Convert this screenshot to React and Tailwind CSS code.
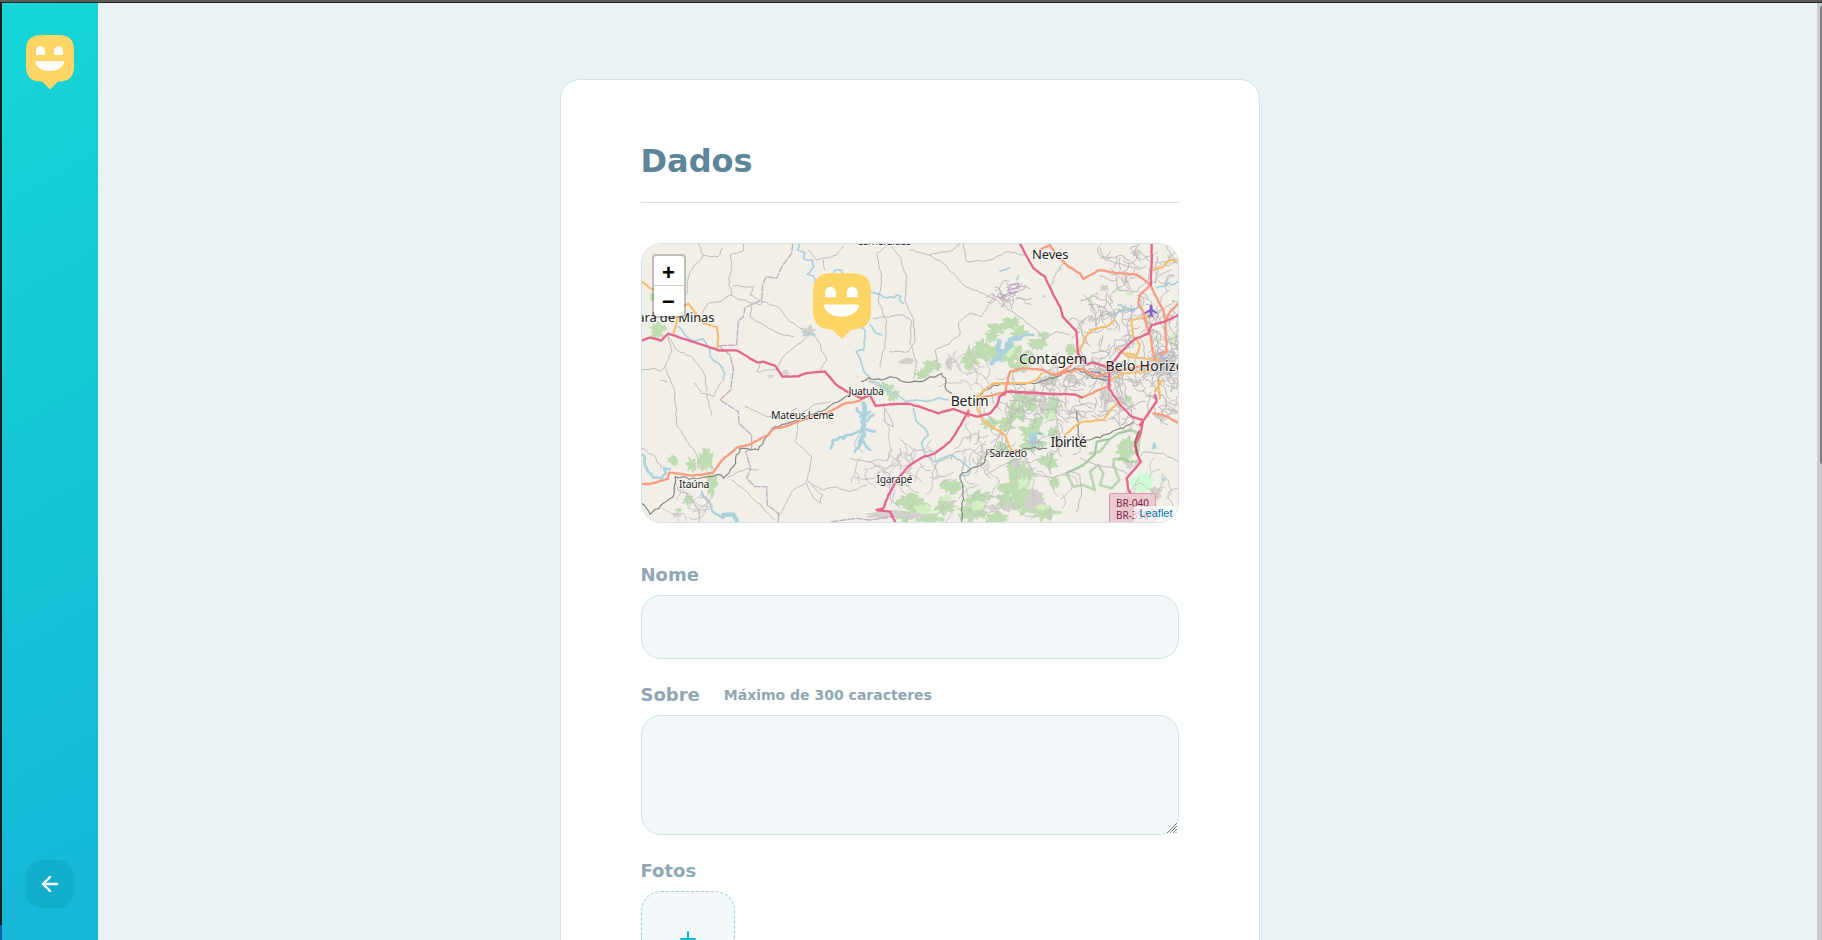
import { FiArrowLeft, FiPlus } from "react-icons/fi";

function Smiley({ className }) {
  return (
    <svg viewBox="0 0 48 54.4" className={className} aria-hidden="true">
      <path d="M15 0H33Q48 0 48 15V31.6Q48 46.6 33 46.6H32L24.8 53.8Q24 54.6 23.2 53.8L16 46.6H15Q0 46.6 0 31.6V15Q0 0 15 0Z" fill="#FFD666" />
      <path d="M10 20V15.8a4.5 4.5 0 0 1 9 0V20ZM28 20V15.8a4.5 4.5 0 0 1 9 0V20Z" fill="#fff" />
      <path d="M10 26H37Q38.6 26 38 27.8C36 33 30.5 36 23.6 36S11.200 33 9.100 27.800Q8.500 26 10 26Z" fill="#fff" />
    </svg>
  );
}

/* Repeatable pseudo random numbers, so the street grid is stable. */
function makeRandom(seed) {
  let s = seed;
  return () => {
    s = (s * 16807) % 2147483647;
    return s / 2147483647;
  };
}

/* Short wandering streets inside a box. */
function streets(seed, count, x, y, w, h, reach) {
  const rnd = makeRandom(seed);
  let d = "";
  for (let i = 0; i < count; i++) {
    let px = x + rnd() * w;
    let py = y + rnd() * h;
    let angle = rnd() * Math.PI * 2;
    d += `M${px.toFixed(0)} ${py.toFixed(0)}`;
    const steps = 3 + Math.floor(rnd() * 5);
    for (let k = 0; k < steps; k++) {
      angle += (rnd() - 0.5) * 1.7;
      px += Math.cos(angle) * reach;
      py += Math.sin(angle) * reach;
      d += `L${px.toFixed(0)} ${py.toFixed(0)}`;
    }
  }
  return d;
}

/* Ragged patches of woodland. */
function woods(seed, spots) {
  const rnd = makeRandom(seed);
  return spots
    .map(([cx, cy, rx, ry]) => {
      const n = 26;
      let d = "";
      for (let i = 0; i < n; i++) {
        const a = (i / n) * Math.PI * 2;
        const k = 0.5 + rnd() * 0.72;
        d += `${i ? "L" : "M"}${(cx + Math.cos(a) * rx * k).toFixed(0)} ${(cy + Math.sin(a) * ry * k).toFixed(0)}`;
      }
      return d + "Z";
    })
    .join("");
}

/* Breaks the straight legs of a polyline into small natural bends. */
function rough(d, amp) {
  const rnd = makeRandom(d.length * 31 + 7);
  const tokens = d.match(/[MLHV]|-?\d+(?:\.\d+)?/g);
  let out = "";
  let cmd = "M";
  let x = 0;
  let y = 0;
  for (let i = 0; i < tokens.length; ) {
    if (/[MLHV]/.test(tokens[i])) cmd = tokens[i++];
    let nx = x;
    let ny = y;
    if (cmd !== "V") nx = Number(tokens[i++]);
    if (cmd !== "H") ny = Number(tokens[i++]);
    if (cmd === "M") {
      out += `M${nx} ${ny}`;
      cmd = "L";
    } else {
      const length = Math.hypot(nx - x, ny - y) || 1;
      const n = Math.max(1, Math.round(length / 11));
      for (let k = 1; k < n; k++) {
        const off = (rnd() - 0.5) * 2 * amp;
        const t = k / n;
        out += `L${(x + (nx - x) * t - ((ny - y) / length) * off).toFixed(1)} ${(y + (ny - y) * t + ((nx - x) / length) * off).toFixed(1)}`;
      }
      out += `L${nx} ${ny}`;
      if (cmd !== "L") cmd = "L";
    }
    x = nx;
    y = ny;
  }
  return out;
}

function Rough({ d, amp = 2.5, ...rest }) {
  return <path d={rough(d, amp)} {...rest} />;
}

const WOOD = woods(77, [
  [305, 265, 34, 22], [245, 305, 26, 20], [260, 282, 28, 20], [330, 292, 28, 20], [180, 368, 34, 38], [218, 345, 26, 36], [300, 352, 34, 42], [250, 350, 26, 30], [378, 328, 30, 20], [402, 300, 18, 14], [350, 372, 26, 24], [68, 392, 30, 20], [40, 418, 24, 16], [485, 345, 16, 22], [330, 395, 26, 18], [425, 435, 18, 14],
  [345, 500, 44, 30], [320, 530, 34, 34], [425, 515, 24, 40], [365, 590, 38, 26], [290, 570, 26, 30], [240, 565, 30, 18], [275, 640, 26, 20], [370, 625, 40, 24], [415, 680, 30, 28], [340, 715, 42, 34], [320, 760, 50, 42], [355, 800, 60, 40], [400, 830, 50, 30], [205, 790, 46, 26], [190, 830, 50, 36], [125, 755, 36, 24], [105, 815, 38, 26], [22, 810, 40, 30], [60, 850, 46, 20], [255, 850, 40, 22], [310, 690, 22, 22], [430, 595, 20, 22], [385, 560, 22, 18], [650, 630, 26, 30], [645, 655, 30, 28], [435, 740, 18, 22], [285, 800, 30, 26], [655, 495, 14, 12],
  [-75, 460, 28, 16], [-50, 480, 22, 20], [-710, 675, 17, 17], [-655, 688, 18, 24], [-612, 676, 28, 34], [-595, 745, 18, 40], [-665, 795, 18, 16], [-695, 825, 12, 8], [-757, 285, 26, 28], [-772, 188, 9, 14], [-5, 800, 34, 24], [-20, 840, 30, 20],
]);

const SCRUB = woods(31, [
  [345, 745, 28, 20], [200, 812, 26, 18], [110, 790, 20, 14], [40, 822, 26, 16], [395, 815, 22, 14], [425, 545, 12, 18], [330, 505, 20, 12], [300, 350, 16, 18], [790, 310, 12, 24], [450, 100, 8, 6], [540, 195, 8, 8], [628, 165, 10, 7], [740, 310, 10, 12], [655, 175, 12, 7],
]);

const BUILT = woods(55, [
  [-302, 290, 20, 18], [-373, 413, 14, 8], [-418, 424, 10, 7], [-10, 378, 22, 10], [678, 52, 16, 14], [582, 160, 14, 10], [545, 252, 16, 10], [745, 370, 26, 26], [765, 395, 30, 24], [590, 480, 22, 34], [400, 510, 18, 30], [368, 475, 14, 14], [318, 680, 18, 14], [370, 795, 34, 30], [735, 775, 22, 26], [660, 690, 16, 12], [-75, 838, 60, 14], [-700, 840, 14, 8], [295, 815, 18, 14], [118, 385, 12, 20], [640, 500, 16, 12], [700, 405, 20, 16], [500, 440, 18, 14], [480, 430, 20, 18], [400, 440, 24, 16], [250, 820, 22, 12], [10, 842, 30, 12],
]);

const DENSE =
  streets(11, 130, 510, 170, 300, 270, 10) +
  streets(12, 34, 570, 30, 220, 160, 12) +
  streets(13, 95, 260, 400, 380, 150, 11) +
  streets(14, 50, 620, 420, 190, 130, 11) +
  streets(15, 36, 120, 560, 400, 110, 12) +
  streets(19, 24, 250, 150, 70, 50, 8) +
  streets(23, 40, 740, 300, 70, 130, 8);

const SPARSE =
  streets(16, 34, -60, 640, 300, 200, 15) +
  streets(17, 24, 180, 640, 280, 210, 15) +
  streets(18, 14, 120, 370, 140, 80, 12) +
  streets(21, 12, 640, 700, 160, 130, 15) +
  streets(22, 18, -150, 640, 160, 120, 14) +
  streets(25, 14, -700, 770, 90, 80, 11);

/* Line work is in thirds of a pixel; labels are in whole pixels. */
function RoadMap() {
  return (
    <svg viewBox="642 244 536 278" className="block h-[278px] w-[536px]" aria-hidden="true">
      <rect x="642" y="244" width="536" height="278" fill="#F2EFE9" />
      <g transform="translate(910 235) scale(.33333)" fill="none" strokeLinejoin="round" strokeLinecap="round">
        <path d={WOOD} fill="#BFDCB2" />
        <path d={SCRUB} fill="#D5EFC4" />
        <path d={BUILT} fill="#D3D0CE" />
        <path d="M655 745L672 725 695 715 722 716 732 738 725 760 700 770 672 765Z" fill="#CFFBD6" />
        {/* protected area outline */}
        <path d="M470 715L520 690 555 658 560 620 600 612 625 595 665 585 690 600 682 660 694 680 660 680 638 670 612 672 610 690 628 735 605 760 570 750 580 715 565 690 540 710 555 765 520 750 490 755ZM540 655L570 650 595 618" stroke="#9CC998" strokeOpacity=".65" strokeWidth="8" />
        <path d="M470 715L520 690 555 658 560 620 600 612 625 595 665 585" stroke="#7EB57D" strokeOpacity=".6" strokeWidth="3" />

        {/* rivers and lakes */}
        <g stroke="#AAD3DF" strokeWidth="5">
          <Rough amp={3} d="M-333 27L-338 45 -315 55 -318 72 -292 75 -288 95 -308 118 -288 125 -285 145 -270 160M-230 112L-225 106 -205 106 -203 118M-118 172L-90 178 -80 186 -48 188 -40 180 -28 184 -32 196 -20 206M-320 302L-300 295 -285 300M-120 270L-100 295 -85 300M-145 278L-135 285 -140 345 -162 350 -150 370 -140 405 -120 430" />
          <Rough d="M-695 275L-670 305 -650 318 -620 312 -600 345 -600 365 -570 390 -556 415 -560 435" />
          <Rough d="M-800 660L-790 700 -770 728 -745 730 -732 715 -738 700 -720 702" strokeWidth="8" />
          <Rough d="M-625 770L-620 785 -600 805 -595 825 -575 840 -560 850" strokeWidth="7" />
          <path d="M-560 840L-530 838 -520 856" strokeWidth="13" />
          <Rough d="M-120 440L-95 445 -60 470 -30 485 -12 500 20 495 50 500 80 490 115 495M10 520L20 560 45 580 55 600 35 625 45 660 75 680 95 670 120 660 150 675 180 700 175 720 150 722" />
          <Rough d="M-140 505L-135 535 -142 560 -138 600 -150 625" strokeWidth="14" />
          <Rough amp={4} d="M-150 625L-166 650M-142 590L-190 600 -232 615 -238 640M-142 580L-105 590M-150 545L-120 530M-138 620L-120 645M-160 520L-142 545M-135 560L-110 540M-190 600L-200 612" strokeWidth="8" />
          <Rough amp={5} d="M245 385L270 370 275 350 262 342 268 318M275 350L300 335M290 330L300 315 330 310" strokeWidth="14" />
          <path d="M330 310L345 298 370 300" strokeWidth="7" />
          <Rough d="M740 158L760 155 775 143 785 150 805 138M270 108L298 98M320 135L326 122M610 250L625 230M400 182L404 186" />
          <Rough amp={4} d="M625 210L640 218 655 220 670 230 685 218 660 225 625 230" strokeWidth="6" />
        </g>
        <path d="M355 630L360 595 375 590 382 608 380 635ZM727 628L735 620 740 638 728 645ZM755 735L768 725 765 740Z" fill="#AAD3DF" />
        <path d="M383 595H393" stroke="#6DB5EE" strokeWidth="3" />

        {/* municipal boundary */}
        <path d="M-352 27L-355 55 -385 95 -400 130 -432 125 -442 150 -445 195 -495 218 -500 245 -515 258 -520 330 -575 332 -540 360 -530 400 -538 465 -570 495 -515 530 -513 565 -475 600 -475 640 -493 650 -478 700 -490 730 -465 755 -430 755 -428 810 -395 835 -395 860M-235 860L-160 850 -120 855 -50 845" stroke="#B79DB8" strokeOpacity=".8" strokeWidth="4" strokeDasharray="19 6" />

        {/* country lanes */}
        <g stroke="#BDBCBE" strokeWidth="3">
          <Rough d="M-635 27L-620 60 -660 110 -670 175M-620 60L-575 65 -562 40M-500 27V48L-540 60 -533 105 -545 130 -535 180M-623 235L-605 205 -570 200 -540 180 -505 195 -450 210 -440 200 -480 180 -470 155 -530 153M-440 200L-390 220 -360 260 -310 290 -280 310 -250 375 -270 410M-475 215L-480 245 -430 275 -380 300 -350 305M-310 305L-380 365 -400 405 -460 410 -450 385M-725 305L-700 345 -650 370 -615 420 -610 470M-725 305L-715 350 -735 395 -720 430 -705 475 -700 570 -640 660 -635 700M-805 405L-770 400 -750 410 -735 395M-645 445L-625 475 -590 485 -565 440M-610 480L-595 540" />
          <Rough d="M-305 45L-280 75 -220 60 -200 35M-255 105L-260 75M-65 27L-100 55 -85 120 -95 200 -70 260 -75 330 -90 395M-110 250L-20 240 5 260M-60 27L-30 65 -10 130 -15 200 10 250 15 320 -5 350 -60 350M0 45L60 60 100 85 130 115 160 150 250 190 320 240 385 290 400 315M60 60L130 45 150 27M160 27L170 80 240 75 295 50 345 60M250 190L215 245 180 235 145 265 150 300 110 330 75 345 85 390M420 165L430 130 475 60M5 260L0 320 20 380 10 430" />
          <Rough d="M-495 515L-430 545 -380 550 -340 520M-335 560L-345 620 -320 640 -295 665 -310 740 -350 765 -385 830 -395 850M-340 555L-320 530 -290 510 -240 500M-550 730L-490 700 -455 705M-535 735L-490 770 -440 820 -405 855M-305 740L-260 765 -220 755 -180 770 -130 750M-310 745L-290 790 -270 805 -262 780 -295 750M-705 735L-695 765 -660 780 -635 820 -632 860M-750 435L-730 440M-805 640L-770 660 -745 700M-125 435L-85 460M-80 510L-60 550 -50 575 -75 560 -75 520M-180 670L-120 680 -60 720 -60 790 -30 820" />
          <Rough d="M230 720L280 690 340 665 370 715 430 730 480 705 510 720 515 780 500 830M510 670L560 690 620 700 660 720M670 695L700 650 760 655 805 680M690 80L660 40 690 27M570 40L585 75 630 85 690 105M800 50L760 90M400 315L440 290 480 300" />
        </g>
        <path d={SPARSE} stroke="#C3C1C3" strokeWidth="2.6" />
        <path d={DENSE} stroke="#B9B8BA" strokeWidth="2.7" />

        {/* railways */}
        <g stroke="#858582" strokeWidth="3.5">
          <Rough amp={4} d="M-805 805L-780 838 -740 805 -710 785 -705 725 -640 732 -600 725 -575 718 -560 730 -530 695 -510 640 -455 645 -425 600 -405 575 -330 555 -255 525 -200 490 -145 470M-145 440L-125 428 -85 435 -60 425 -20 440 25 440 50 432 95 415 108 440 105 455 125 475M200 485L250 450 310 445 380 445 440 425 495 400 550 430 600 440M505 400L600 425M500 530L510 620 540 615 600 595 668 562M410 640L350 640 310 650 230 645 225 680 200 695 150 722 158 780 155 860" />
        </g>

        {/* secondary roads */}
        <g stroke="#F8BC6D" strokeWidth="6">
          <Rough amp={1.5} d="M-805 140L-780 160 -765 165M-710 300L-700 260 -690 220 -665 205 -650 225 -620 265 -580 275 -575 310 -580 345" />
          <Rough amp={1.5} d="M730 105L760 95 775 78 805 72M505 355L530 300 545 285 590 275 615 255M665 255L668 300 690 330 680 360 650 355M665 255L720 245M625 340L655 365 700 370 745 375M600 435L640 415 730 405M250 445L350 445 380 435 395 415M465 600L500 570 520 560 580 555 605 520 630 500M200 515L220 560 285 600 300 640 340 665M200 485L250 445M735 470L755 440 758 435M745 435L750 490" />
        </g>

        {/* trunk roads */}
        <g stroke="#F99D80" strokeWidth="7">
          <Rough amp={1.2} d="M-805 748L-780 747 -750 738 -727 732 -722 713 -650 722 -590 712 -563 675 -520 638 -485 630 -425 600 -410 582 -375 575 -325 555 -245 532 -195 505 -153 498 -125 480" />
          <Rough amp={1.2} d="M390 45L420 30 430 45 455 75 475 95 510 115 520 133 565 105 630 115 680 118 722 150M722 150L690 180 685 210 700 230 710 275 722 300 725 330 735 375M722 150L745 200 760 225 765 255 770 350 750 355M290 450L300 410 340 400 400 405 435 420 480 395 505 360M520 405L560 425 600 410 720 390M440 420L520 400M290 445L285 480M210 490L290 470 400 475M515 488L600 450M175 525L175 545M730 535L760 540 805 563M770 255L780 230 805 205" />
        </g>

        {/* motorways */}
        <g stroke="#E5678A" strokeWidth="7">
          <Rough amp={0.8} d="M-805 317L-780 308 -747 317 -725 296 -575 346 -518 347 -460 382 -440 380 -405 392 -383 425 -335 424 -313 415 -255 409 -220 450 -185 472 -145 490 -120 480 -103 513 -45 507 0 507 35 517 85 535 130 522 165 535 200 545 240 535 262 510 268 485 290 470 350 472 430 477 495 478 515 487M0 690L35 668 75 655 120 620 140 590 175 530M0 690L-40 735 -65 780 -80 820 -100 825 -60 830 -45 860" />
          <Rough amp={0.8} d="M330 27L370 100 405 125 430 180 450 215 458 245 500 290 503 355 530 388 550 382 595 397M595 397L635 350 670 315 715 295 725 270 765 260 805 240M725 27V85L722 150M597 397V460L630 510 665 545 700 555 690 600 675 630 680 655 692 680 650 730 655 765 690 810M690 570L740 500 735 480" />
        </g>
        <path d="M687 588L675 620 683 660" stroke="#A95F60" strokeWidth="5" />
        <path d="M270 190L285 180M300 175L320 170M300 150L325 145V160M280 180V190M295 165L325 158" stroke="#C7A0C5" strokeWidth="5" />
        <path d="M723 208Q727 208 727 216V223L742 232V236L727 231V239L732 243V246L723 244 714 246V243L719 239V231L704 236V232L719 223V216Q719 208 723 208Z" fill="#8461C4" />
      </g>

      <rect x="1109.500" y="493.500" width="46" height="32" rx="1" fill="#ECCAD1" stroke="#D69BAA" />
      <g fontFamily="'Noto Sans', sans-serif" fill="#222" stroke="#fff" strokeOpacity=".65" strokeWidth="2" paintOrder="stroke" strokeLinejoin="round">
        <g fontSize="13">
          <text x="714.500" y="322" textAnchor="end" textLength="85">Pará de Minas</text>
          <text x="1032" y="259" textLength="36.500">Neves</text>
          <text x="1019" y="364" fontSize="14" textLength="68">Contagem</text>
          <text x="1105.500" y="370.500" fontSize="14" textLength="101">Belo Horizonte</text>
          <text x="950.700" y="406" fontSize="14" textLength="38">Betim</text>
          <text x="1050.500" y="446.700" fontSize="14" textLength="36.500">Ibirité</text>
        </g>
        <g fontSize="10.500">
          <text x="858" y="245" textLength="53">Esmeraldas</text>
          <text x="848.500" y="394.500" textLength="35.500">Juatuba</text>
          <text x="771" y="418.800" textLength="63">Mateus Leme</text>
          <text x="679" y="488" textLength="30.500">Itaúna</text>
          <text x="876.500" y="482.700" textLength="36">Igarapé</text>
          <text x="989.500" y="457" textLength="37.500">Sarzedo</text>
        </g>
      </g>
      <g fontFamily="'Noto Sans', sans-serif" fontSize="10" fill="#7D2245">
        <text x="1116" y="506.500" textLength="33">BR-040</text>
        <text x="1116" y="518.500" textLength="33">BR-356</text>
      </g>
    </svg>
  );
}

function MapPanel() {
  return (
    <div className="relative mt-10 h-[280px] overflow-hidden rounded-[20px] border border-[#D3E2E5] font-normal">
      <RoadMap />
      <Smiley className="absolute left-[171px] top-[29px] h-[66px] w-[58px]" />
      <div className="absolute left-2.5 top-2.5 flex flex-col rounded border-2 border-black/20 bg-clip-padding font-['Liberation_Sans',sans-serif] text-[22px] font-bold text-black">
        <button type="button" className="h-[30px] w-[30px] rounded-t-sm border-b border-[#ccc] bg-white pt-[2px] leading-[29px]">+</button>
        <button type="button" className="h-[30px] w-[30px] rounded-b-sm bg-white pt-px leading-[29px]">−</button>
      </div>
      <div className="absolute bottom-0 right-0 bg-white/70 px-[5px] pb-px font-['Liberation_Sans',sans-serif] text-[11px] leading-[15px] text-[#0078A8]">
        Leaflet
      </div>
    </div>
  );
}

function Label({ text, hint }) {
  return (
    <label className="mb-2 flex h-6 items-center text-[18px] leading-6 text-[#8FA7B3]">
      {text}
      {hint && <span className="ml-6 text-[14px]">{hint}</span>}
    </label>
  );
}

function ResizeGrip() {
  return (
    <svg viewBox="0 0 10 10" className="absolute bottom-[2px] right-[2px] size-2.5" stroke="#707376" strokeWidth=".9" aria-hidden="true">
      <path d="M0 10L10 0M3 10L10 3M6 10L10 6M8.500 10L10 8.500" />
    </svg>
  );
}

export default function App() {
  return (
    <div className="flex h-[940px] w-full flex-col overflow-hidden bg-[#EBF2F5] font-['DejaVu_Sans',sans-serif]">
      <div className="h-[3px] shrink-0 border-b border-[#272727] bg-[#5A5A5A]" />
      <div className="flex min-h-0 flex-1">
        <div className="flex w-[2px] flex-col justify-end bg-[#1E1E1E]">
          <div className="h-[15px] bg-[#0E63A8]" />
        </div>
        <aside className="flex w-24 flex-col items-center justify-between bg-[linear-gradient(329.54deg,#15B6D6_0%,#15D6D6_100%)] pb-8 pt-8">
          <Smiley className="h-[54.400px] w-12" />
          <button type="button" className="flex size-12 items-center justify-center rounded-2xl bg-[#12AFCB]">
            <FiArrowLeft size={24} color="#fff" strokeWidth={2.4} />
          </button>
        </aside>
        <main className="flex-1 overflow-hidden pl-[461.5px] pt-[76px]">
          <form className="h-[1200px] w-[700px] rounded-[20px] border border-[#D3E2E5] bg-white px-[80px] pt-[61px] font-bold">
            <h1 className="h-[62px] border-b border-[#D3E2E5] text-[32px] leading-[40px] text-[#5C8599]">Dados</h1>
            <MapPanel />
            <div className="mt-10">
              <Label text="Nome" />
              <input className="block h-16 w-full rounded-[20px] border border-[#D3E2E5] bg-[#F5F8FA] px-4" />
            </div>
            <div className="mt-6">
              <Label text="Sobre" hint="Máximo de 300 caracteres" />
              <div className="relative">
                <textarea className="block h-[120px] w-full resize-none rounded-[20px] border border-[#D3E2E5] bg-[#F5F8FA] p-4" />
                <ResizeGrip />
              </div>
            </div>
            <div className="mt-6">
              <Label text="Fotos" />
              <div className="grid grid-cols-5 gap-4">
                <button type="button" className="flex h-24 items-center justify-center rounded-[20px] border border-dashed border-[#96D2F0] bg-[#F5F8FA]">
                  <FiPlus size={24} color="#15B6D6" />
                </button>
              </div>
            </div>
          </form>
        </main>
        <div className="flex w-[5px] flex-col items-end bg-[#CBCBCB] pt-[3px]">
          <div className="h-[458px] w-[2px] rounded-l-sm bg-[#7F7F7F]" />
        </div>
      </div>
    </div>
  );
}
